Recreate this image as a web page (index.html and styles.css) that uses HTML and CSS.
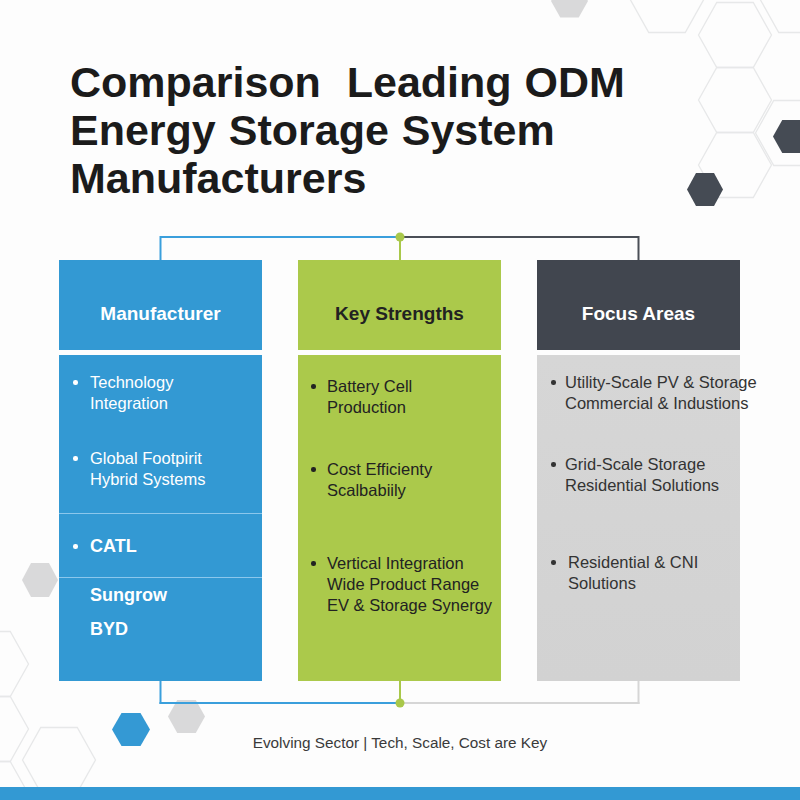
FILE: index.html
```html
<!DOCTYPE html>
<html lang="en">
<head>
<meta charset="utf-8">
<title>Comparison Leading ODM Energy Storage System Manufacturers</title>
<link rel="stylesheet" href="styles.css">
</head>
<body>
<div class="page">
  <svg class="bg" width="800" height="800" viewBox="0 0 800 800" aria-hidden="true">
    <g class="hex-outline">
      <polygon points="630.5,0 648.75,-32.5 685.25,-32.5 703.5,0 685.25,32.5 648.75,32.5"/>
      <polygon points="698.5,35 716.75,2.5 753.25,2.5 771.5,35 753.25,67.5 716.75,67.5"/>
      <polygon points="698.5,100 716.75,67.5 753.25,67.5 771.5,100 753.25,132.5 716.75,132.5"/>
      <polygon points="698.5,165 716.75,132.5 753.25,132.5 771.5,165 753.25,197.5 716.75,197.5"/>
      <polygon points="760.5,0 778.75,-32.5 815.25,-32.5 833.5,0 815.25,32.5 778.75,32.5"/>
      <polygon points="755.5,133 773.75,100.5 810.25,100.5 828.5,133 810.25,165.5 773.75,165.5"/>
      <polygon points="-44.5,664 -26.25,631.5 10.25,631.5 28.5,664 10.25,696.5 -26.25,696.5"/>
      <polygon points="-44.5,729 -26.25,696.5 10.25,696.5 28.5,729 10.25,761.5 -26.25,761.5"/>
      <polygon points="22.5,760 40.75,727.5 77.25,727.5 95.5,760 77.25,792.5 40.75,792.5"/>
      <polygon points="-44.5,794 -26.25,761.5 10.25,761.5 28.5,794 10.25,826.5 -26.25,826.5"/>
    </g>
    <polygon class="hex-gray" points="551,1 560.25,-15.5 578.75,-15.5 588,1 578.75,17.5 560.25,17.5"/>
    <polygon class="hex-dark" points="773,136.5 782.25,120 800.75,120 810,136.5 800.75,153 782.25,153"/>
    <polygon class="hex-dark" points="687,189.5 696,173 714,173 723,189.5 714,206 696,206"/>
    <polygon class="hex-gray" points="22,580 31,563 49,563 58,580 49,597 31,597"/>
    <polygon class="hex-blue" points="112,729.5 121.5,713 140.5,713 150,729.5 140.5,746 121.5,746"/>
    <polygon class="hex-gray" points="168,716.5 177.25,700 195.75,700 205,716.5 195.75,733 177.25,733"/>
  </svg>

  <main class="content">
    <h1 class="title">Comparison&nbsp; Leading ODM<br>Energy Storage System<br>Manufacturers</h1>

    <div class="board">
      <svg class="conn" width="681" height="30" viewBox="0 0 681 30" aria-hidden="true">
        <line class="ln-blue" x1="101.5" y1="7" x2="341" y2="7"/>
        <line class="ln-dark" x1="341" y1="7" x2="579.5" y2="7"/>
        <line class="ln-blue" x1="101.5" y1="6" x2="101.5" y2="30"/>
        <line class="ln-green" x1="341" y1="7" x2="341" y2="30"/>
        <line class="ln-dark" x1="579.5" y1="6" x2="579.5" y2="30"/>
        <circle class="dot" cx="341" cy="7" r="4.5"/>
      </svg>

      <div class="cols">
        <section class="col col-blue">
          <div class="col-head">Manufacturer</div>
          <div class="col-body">
            <div class="sec sec-a">
              <ul class="list">
                <li class="item">Technology<br>Integration</li>
                <li class="item item-gap-34">Global Footpirit<br>Hybrid Systems</li>
              </ul>
            </div>
            <div class="sec sec-b">
              <ul class="list">
                <li class="item item-brand">CATL</li>
              </ul>
            </div>
            <div class="sec sec-c">
              <div class="brand">Sungrow</div>
              <div class="brand brand-gap">BYD</div>
            </div>
          </div>
        </section>

        <section class="col col-green">
          <div class="col-head">Key Strengths</div>
          <div class="col-body">
            <ul class="list">
              <li class="item">Battery Cell<br>Production</li>
              <li class="item item-gap-41">Cost Efficienty<br>Scalbabiily</li>
              <li class="item item-gap-52">Vertical Integration<br>Wide Product Range<br>EV &amp; Storage Synergy</li>
            </ul>
          </div>
        </section>

        <section class="col col-dark">
          <div class="col-head">Focus Areas</div>
          <div class="col-body">
            <ul class="list">
              <li class="item">Utility-Scale PV &amp; Storage<br>Commercial &amp; Industions</li>
              <li class="item item-gap-40">Grid-Scale Storage<br>Residential Solutions</li>
              <li class="item item-gap-56 item-shift">Residential &amp; CNI<br>Solutions</li>
            </ul>
          </div>
        </section>
      </div>

      <svg class="conn" width="681" height="30" viewBox="0 0 681 30" aria-hidden="true">
        <line class="ln-blue" x1="101.5" y1="0" x2="101.5" y2="23"/>
        <line class="ln-green" x1="341" y1="0" x2="341" y2="22"/>
        <line class="ln-light" x1="579.5" y1="0" x2="579.5" y2="23"/>
        <line class="ln-blue" x1="100.5" y1="22" x2="341" y2="22"/>
        <line class="ln-light" x1="341" y1="22" x2="580.5" y2="22"/>
        <circle class="dot" cx="341" cy="22" r="4.5"/>
      </svg>
    </div>

    <p class="note">Evolving Sector | Tech, Scale, Cost are Key</p>
  </main>

  <div class="bottom-bar"></div>
</div>
</body>
</html>
```

FILE: styles.css
```css
* {
  box-sizing: border-box;
}

html, body {
  margin: 0;
  padding: 0;
  background: #fdfdfd;
}

body {
  font-family: "Liberation Sans", Arial, sans-serif;
}

.page {
  position: relative;
  width: 800px;
  height: 800px;
  overflow: hidden;
  display: flex;
  flex-direction: column;
  background: #fdfdfd;
}

.bg {
  position: absolute;
  left: 0;
  top: 0;
  z-index: 0;
}

.hex-outline polygon {
  fill: none;
  stroke: #e7e8e9;
  stroke-width: 1.3;
}

.hex-gray { fill: #d9d9da; }
.hex-dark { fill: #454b54; }
.hex-blue { fill: #3499d4; }

.content {
  position: relative;
  z-index: 1;
  display: flex;
  flex-direction: column;
}

.title {
  margin: 0;
  padding: 58px 0 0 70px;
  font-family: "Liberation Sans", Arial, sans-serif;
  font-weight: 700;
  font-size: 43px;
  line-height: 48px;
  color: #1b1b1b;
  letter-spacing: 0;
  word-spacing: 1px;
}

.board {
  margin: 28px 0 0 59px;
  width: 681px;
  display: flex;
  flex-direction: column;
}

.conn {
  display: block;
}

.conn line {
  stroke-width: 2;
  fill: none;
}

.ln-blue { stroke: #3a9fdc; }
.ln-dark { stroke: #4a4f57; }
.ln-green { stroke: #a9c84a; }
.ln-light { stroke: #d6d6d6; }
.dot { fill: #a9c84a; }

.cols {
  display: grid;
  grid-template-columns: 203px 203px 203px;
  column-gap: 36px;
}

.col {
  display: flex;
  flex-direction: column;
  gap: 5px;
}

.col-head {
  height: 90px;
  display: flex;
  align-items: center;
  justify-content: center;
  font-weight: 700;
  font-size: 19px;
  padding-top: 17px;
}

.col-body {
  height: 326px;
  font-size: 16.5px;
  line-height: 21px;
}

.col-blue .col-head,
.col-blue .col-body {
  background: #3399d3;
  color: #ffffff;
}

.col-green .col-head,
.col-green .col-body {
  background: #abc94b;
  color: #222222;
}

.col-dark .col-head {
  background: #41464f;
  color: #ffffff;
}

.col-dark .col-body {
  background: linear-gradient(180deg, #d6d6d6 0%, #d2d2d2 100%);
  color: #333333;
}

.list {
  list-style: none;
  margin: 0;
  padding: 0;
}

.item {
  display: flex;
  align-items: flex-start;
  white-space: nowrap;
}

.item::before {
  content: "";
  flex: none;
  width: 4.5px;
  height: 4.5px;
  margin-top: 8.5px;
  border-radius: 50%;
  background: currentColor;
}

/* Blue column */
.col-blue .col-body {
  display: flex;
  flex-direction: column;
}

.sec-a {
  height: 158px;
  padding: 16.5px 0 0 14px;
}

.sec-b {
  height: 64px;
  border-top: 1.5px solid #8cc7ec;
  padding: 21px 0 0 14px;
}

.sec-c {
  flex: 1;
  border-top: 1.5px solid #8cc7ec;
  padding: 5.5px 0 0 31px;
}

.col-blue .item::before {
  margin-right: 12.5px;
}

.col-blue .item-brand {
  font-weight: 700;
  font-size: 18px;
  line-height: 22px;
}

.col-blue .item-brand::before {
  margin-top: 9px;
}

.brand {
  font-weight: 700;
  font-size: 18px;
  line-height: 22px;
}

.brand-gap {
  margin-top: 12px;
}

/* Green column */
.col-green .list {
  padding: 20.5px 0 0 13px;
}

.col-green .item::before {
  margin-right: 11.5px;
}

/* Gray column */
.col-dark .list {
  padding: 16.5px 0 0 14px;
}

.col-dark .item::before {
  margin-right: 9.5px;
}

.col-dark .item-shift::before {
  margin-right: 12.5px;
}

.item-gap-34 { margin-top: 34px; }
.item-gap-40 { margin-top: 40px; }
.item-gap-41 { margin-top: 41px; }
.item-gap-52 { margin-top: 52px; }
.item-gap-56 { margin-top: 56px; }

.note {
  margin: 23px 0 0 0;
  text-align: center;
  font-size: 15.3px;
  line-height: 18px;
  color: #3a3a3a;
}

.bottom-bar {
  position: relative;
  z-index: 1;
  margin-top: auto;
  height: 13px;
  background: #3399d3;
}
```
